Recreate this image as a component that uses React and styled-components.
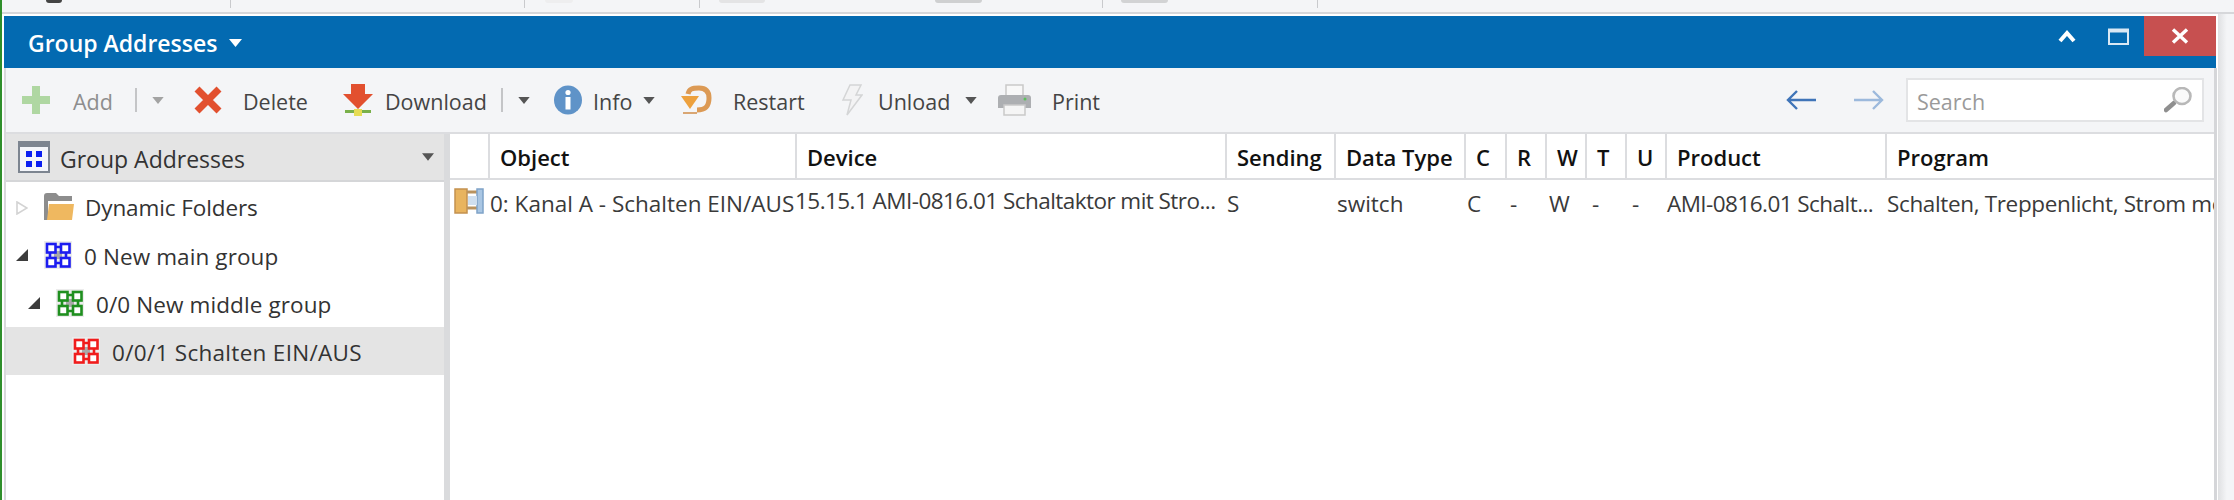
import styled, { createGlobalStyle } from "styled-components"

const GlobalStyle = createGlobalStyle`
  html, body { margin: 0; padding: 0; background: #fff; }
  body { font-family: "Open Sans", "Noto Sans", sans-serif; }
`

const Shell = styled.div`
  width: 2234px;
  height: 500px;
  overflow: hidden;
  display: flex;
  box-sizing: border-box;
  border-left: 2px solid #2f8f2b;
`
const Main = styled.div`
  flex: 1;
  display: flex;
  flex-direction: column;
  min-width: 0;
`
const TopStrip = styled.div`
  height: 12px;
  display: flex;
  background: #f4f5f7;
  border-bottom: 2px solid #d6d7da;
  overflow: hidden;
`
const TopTab = styled.div`
  width: ${(p) => p.$w}px;
  height: 8px;
  flex: none;
  box-sizing: border-box;
  display: flex;
  gap: ${(p) => p.$gap || 0}px;
  padding-left: ${(p) => p.$pad || 0}px;
  border-right: 1px solid #c9cacd;
`
const Stub = styled.div`
  width: ${(p) => p.$w}px;
  height: 3px;
  background: ${(p) => p.$color};
  border-radius: 0 0 6px 6px;
  filter: blur(0.6px);
`
const Stage = styled.div`
  flex: 1;
  display: flex;
  min-height: 0;
  background: #fff;
  padding-left: 2px;
`
const Window = styled.div`
  width: 2213px;
  flex: none;
  display: flex;
  flex-direction: column;
  padding-top: 2px;
`
const Backdrop = styled.div`
  flex: 1;
  margin: 0 0 0 1px;
  background: linear-gradient(to right, #dfe0e2, #f4f5f7 55%);
`
const TitleBar = styled.div`
  height: 52px;
  flex: none;
  margin-right: 1px;
  background: #036ab1;
  display: flex;
  align-items: flex-start;
  color: #fff;
`
const Title = styled.div`
  display: flex;
  align-items: center;
  gap: 11px;
  height: 52px;
  padding: 1px 0 0 24px;
  box-sizing: border-box;
  font-size: 23px;
  font-weight: 600;
`
const WindowButtons = styled.div`
  margin-left: auto;
  display: flex;
  align-items: flex-start;
`
const WinButton = styled.div`
  width: ${(p) => p.$w}px;
  height: 40px;
  display: flex;
  align-items: center;
  justify-content: center;
  background: ${(p) => (p.$close ? "#c75050" : "transparent")};
`
const Body = styled.div`
  flex: 1;
  min-height: 0;
  display: flex;
  flex-direction: column;
  border-left: 2px solid #d9d9db;
  border-right: 3px solid #d5d6d9;
`
const Toolbar = styled.div`
  height: 66px;
  flex: none;
  box-sizing: border-box;
  display: flex;
  align-items: center;
  padding-left: 15px;
  background: #f4f5f7;
  border-bottom: 2px solid #dcdde0;
`
const ToolButton = styled.div`
  width: ${(p) => p.$w}px;
  flex: none;
  display: flex;
  align-items: center;
  gap: ${(p) => p.$gap}px;
`
const ToolLabel = styled.span`
  font-size: 21.5px;
  line-height: 28px;
  margin-top: 3px;
  color: ${(p) => (p.$muted ? "#8e8e8e" : "#444")};
  white-space: nowrap;
`
const ToolDivider = styled.div`
  width: 2px;
  height: 24px;
  flex: none;
  margin-right: 15px;
  background: #c4c5c7;
`
const NavArrows = styled.div`
  margin-left: auto;
  display: flex;
  align-items: center;
  gap: 38px;
  margin-right: 22px;
`
const SearchBox = styled.div`
  width: 298px;
  height: 44px;
  flex: none;
  box-sizing: border-box;
  margin-right: 10px;
  display: flex;
  align-items: center;
  justify-content: space-between;
  padding: 0 10px 0 9px;
  background: #fff;
  border: 2px solid #e3e4e6;
  color: #9a9a9a;
  font-size: 21.5px;
`
const SearchText = styled.span`
  margin-top: 3px;
`
const Content = styled.div`
  flex: 1;
  min-height: 0;
  display: flex;
  background: #fff;
`
const Sidebar = styled.div`
  width: 438px;
  flex: none;
  border-right: 6px solid #dadbdd;
`
const SideHeader = styled.div`
  height: 46px;
  margin-bottom: 1px;
  display: flex;
  align-items: center;
  padding: 0 10px 0 12px;
  background: #e4e4e4;
  border-bottom: 2px solid #d5d6d8;
  font-size: 23px;
  color: #333;
`
const SideTitle = styled.span`
  flex: 1;
  margin: 3px 0 0 10px;
`
const TreeRow = styled.div`
  height: 48px;
  box-sizing: border-box;
  display: flex;
  align-items: center;
  padding-left: ${(p) => p.$indent}px;
  background: ${(p) => (p.$selected ? "#e4e4e4" : "transparent")};
  font-size: 22.5px;
  letter-spacing: ${(p) => p.$track || 0}px;
  color: #333;
  white-space: nowrap;
`
const TreeCaret = styled.span`
  width: 12px;
  height: 12px;
  flex: none;
  margin-right: 16px;
  display: flex;
`
const TreeLabel = styled.span`
  margin-left: ${(p) => p.$gap ?? 12}px;
  margin-top: ${(p) => p.$top ?? 2}px;
`
const Grid = styled.div`
  flex: 1;
  min-width: 0;
  overflow: hidden;
`
const GridLine = styled.div`
  display: grid;
  grid-template-columns: 40px 307px 430px 109px 130px 41px 40px 40px 40px 40px 220px 327px;
`
const HeaderCell = styled.div`
  height: 46px;
  box-sizing: border-box;
  padding-left: 10px;
  border-right: ${(p) => (p.$last ? "none" : "2px solid #dcdde0")};
  border-bottom: 2px solid #dcdde0;
  font-size: 22px;
  font-weight: 600;
  line-height: 47px;
  color: #111;
  white-space: nowrap;
  overflow: hidden;
`
const RowCell = styled.div`
  height: 48px;
  line-height: ${(p) => (p.$raised ? 42 : 47)}px;
  padding-left: ${(p) => p.$pad || 0}px;
  margin-left: ${(p) => p.$shift || 0}px;
  font-size: 22.5px;
  letter-spacing: ${(p) => p.$track || 0}px;
  color: #3a3a3a;
  white-space: nowrap;
  overflow: ${(p) => (p.$clip ? "hidden" : "visible")};
`
const ObjectIconCell = styled.div`
  height: 48px;
  padding: 8px 0 0 4px;
  box-sizing: border-box;
`
const Caret = ({ color = "#555", w = 13, h = 8 }) => (
  <svg width={w} height={h} viewBox="0 0 13 8" style={{ flex: "none" }}>
    <path d="M0 0H13L6.5 8Z" fill={color} />
  </svg>
)

const PlusIcon = () => (
  <svg width="30" height="30" viewBox="0 0 30 30" style={{ flex: "none" }}>
    <path d="M11 1H19V11H29V19H19V29H11V19H1V11H11Z" fill="#afd7a2" />
  </svg>
)
const CrossIcon = () => (
  <svg width="30" height="30" viewBox="0 0 30 30" style={{ flex: "none" }}>
    <path d="M4 4L26 26M26 4L4 26" stroke="#e2502f" strokeWidth="7" />
  </svg>
)
const DownloadIcon = () => (
  <svg width="30" height="32" viewBox="0 0 30 32" style={{ flex: "none" }}>
    <path d="M8 0H22V10H30L15 25L0 10H8Z" fill="#e2502f" />
    <rect x="2" y="26" width="26" height="3" fill="#79b04a" />
    <rect x="11" y="25" width="8" height="7" fill="#e6dc55" />
  </svg>
)
const InfoIcon = () => (
  <svg width="28" height="30" viewBox="0 0 28 30" style={{ flex: "none" }}>
    <ellipse cx="14" cy="15" rx="14" ry="14.5" fill="#5f93c8" />
    <circle cx="14" cy="7.5" r="2.6" fill="#fff" />
    <rect x="11.5" y="12" width="5" height="12.5" fill="#fff" />
  </svg>
)
const RestartIcon = () => (
  <svg width="32" height="30" viewBox="0 0 32 30" style={{ flex: "none" }}>
    <path d="M8 9C9 4 12 3 19 3C26 3 29 7 29 13C29 21 26 25 17 25" fill="none" stroke="#dc9a55" strokeWidth="5" />
    <path d="M1 11H19L10 24Z" fill="#eda13e" />
    <rect x="3" y="27" width="14" height="2" fill="#d9a673" />
  </svg>
)
const BoltIcon = () => (
  <svg width="22" height="32" viewBox="0 0 22 32" style={{ flex: "none" }}>
    <path d="M9 1H20L15 11H21L6 31L10 16H2Z" fill="#f3f3f4" stroke="#d4d5d6" strokeWidth="1.5" />
  </svg>
)
const PrintIcon = () => (
  <svg width="33" height="32" viewBox="0 0 33 32" style={{ flex: "none" }}>
    <rect x="8" y="1" width="17" height="11" fill="#f8f8f8" stroke="#c9c9c9" strokeWidth="1.5" />
    <path d="M3 11H30Q33 11 33 14V24H0V14Q0 11 3 11Z" fill="#adafb2" />
    <circle cx="27" cy="15" r="1.5" fill="#5cc15c" />
    <rect x="6" y="21" width="21" height="10" fill="#f5f5f5" stroke="#c9c9c9" strokeWidth="1.5" />
  </svg>
)
const ArrowIcon = ({ color, flip }) => (
  <svg width="30" height="20" viewBox="0 0 30 20" style={{ transform: flip ? "scaleX(-1)" : "none", flex: "none" }}>
    <path d="M30 10H2M11 1L2 10L11 19" fill="none" stroke={color} strokeWidth="2.4" />
  </svg>
)
const SearchIcon = () => (
  <svg width="28" height="26" viewBox="0 0 28 26" style={{ flex: "none" }}>
    <path d="M2 23L10 16" stroke="#8f8f8f" strokeWidth="4.5" strokeLinecap="round" />
    <ellipse cx="18" cy="9" rx="8.5" ry="8" fill="#fafafa" stroke="#b8b8b8" strokeWidth="2.6" />
  </svg>
)
const ChevronIcon = () => (
  <svg width="18" height="14" viewBox="0 0 18 14">
    <path d="M2 12L9 4L16 12" fill="none" stroke="#fff" strokeWidth="4" />
  </svg>
)
const MaximizeIcon = () => (
  <svg width="21" height="17" viewBox="0 0 21 17">
    <rect x="1" y="1.5" width="19" height="14.5" fill="none" stroke="#d9e8f4" strokeWidth="2" />
    <rect x="1" y="1" width="19" height="3.5" fill="#d9e8f4" />
  </svg>
)
const CloseIcon = () => (
  <svg width="18" height="16" viewBox="0 0 18 16">
    <path d="M2 1.5L16 14.5M16 1.5L2 14.5" stroke="#fff" strokeWidth="3.4" />
  </svg>
)
const PanelIcon = () => (
  <svg width="32" height="32" viewBox="0 0 32 32" style={{ flex: "none" }}>
    <rect x="1" y="1" width="30" height="30" fill="#f4f6fa" stroke="#7d8590" strokeWidth="2" />
    <rect x="1" y="1" width="30" height="5" fill="#7d8590" />
    <rect x="8" y="10" width="6" height="6" fill="#0b1ff0" />
    <rect x="18" y="10" width="6" height="6" fill="#0b1ff0" />
    <rect x="8" y="20" width="6" height="6" fill="#0b1ff0" />
    <rect x="18" y="20" width="6" height="6" fill="#0b1ff0" />
  </svg>
)
const GroupIcon = ({ color }) => (
  <svg width="28" height="28" viewBox="0 0 28 28" style={{ flex: "none" }}>
    <rect width="28" height="28" fill="#ececec" />
    <rect x="10" y="10" width="8" height="8" fill="#a9a9a9" />
    <path d="M11 6H17M11 22H17M6 11V17M22 11V17" stroke={color} strokeWidth="2.6" />
    {[3, 17].map((x) =>
      [3, 17].map((y) => (
        <rect key={`${x}-${y}`} x={x} y={y} width="8.5" height="8.5" fill="#fff" stroke={color} strokeWidth="2.6" />
      ))
    )}
  </svg>
)
const FolderIcon = () => (
  <svg width="30" height="28" viewBox="0 0 30 28" style={{ flex: "none" }}>
    <path d="M0 3Q0 0 3 0H12L15 3H28V8H4V27H0Z" fill="#8d8d8d" />
    <path d="M5 11H30L28 27H3Z" fill="#efb860" />
  </svg>
)
const ObjectIcon = () => (
  <svg width="30" height="26" viewBox="0 0 30 26">
    <rect x="1" y="1" width="12" height="24" fill="#e8b45f" stroke="#c3914f" strokeWidth="1.5" />
    <path d="M13 4H23M13 20H23" stroke="#b9935f" strokeWidth="3" />
    <rect x="23" y="1" width="6" height="24" fill="#a9c6e3" stroke="#7fa3c8" strokeWidth="1.5" />
    <rect x="14" y="8" width="9" height="9" fill="#cfdfef" />
  </svg>
)
const TreeArrow = ({ open }) =>
  open ? (
    <svg width="12" height="12" viewBox="0 0 12 12">
      <path d="M12 0V12H0Z" fill="#3c3c3c" />
    </svg>
  ) : (
    <svg width="12" height="14" viewBox="0 0 12 14">
      <path d="M1 1L11 7L1 13Z" fill="#fff" stroke="#d3d3d3" strokeWidth="1.6" />
    </svg>
  )

const headers = ["", "Object", "Device", "Sending", "Data Type", "C", "R", "W", "T", "U", "Product", "Program"]

export default function App() {
  return (
    <>
      <GlobalStyle />
      <Shell>
        <Main>
          <TopStrip>
            <TopTab $w={229} $pad={44}>
              <Stub $w={16} $color="#444" />
            </TopTab>
            <TopTab $w={294} />
            <TopTab $w={175} $pad={20}>
              <Stub $w={28} $color="#eeeeef" />
            </TopTab>
            <TopTab $w={403} $pad={19} $gap={170}>
              <Stub $w={46} $color="#e4e4e5" />
              <Stub $w={47} $color="#cfd0d1" />
            </TopTab>
            <TopTab $w={215} $pad={18}>
              <Stub $w={47} $color="#d2d3d4" />
            </TopTab>
          </TopStrip>
          <Stage>
            <Window>
              <TitleBar>
                <Title>
                  Group Addresses
                  <Caret color="#fff" w={15} h={8} />
                </Title>
                <WindowButtons>
                  <WinButton $w={50}>
                    <ChevronIcon />
                  </WinButton>
                  <WinButton $w={52}>
                    <MaximizeIcon />
                  </WinButton>
                  <WinButton $w={72} $close>
                    <CloseIcon />
                  </WinButton>
                </WindowButtons>
              </TitleBar>
              <Body>
                <Toolbar>
                  <ToolButton $w={114} $gap={22}>
                    <PlusIcon />
                    <ToolLabel $muted>Add</ToolLabel>
                  </ToolButton>
                  <ToolDivider />
                  <ToolButton $w={41} $gap={0}>
                    <Caret color="#a3a3a3" w={12} h={7} />
                  </ToolButton>
                  <ToolButton $w={150} $gap={20}>
                    <CrossIcon />
                    <ToolLabel>Delete</ToolLabel>
                  </ToolButton>
                  <ToolButton $w={158} $gap={12}>
                    <DownloadIcon />
                    <ToolLabel>Download</ToolLabel>
                  </ToolButton>
                  <ToolDivider />
                  <ToolButton $w={36} $gap={0}>
                    <Caret w={12} h={7} />
                  </ToolButton>
                  <ToolButton $w={126} $gap={11}>
                    <InfoIcon />
                    <ToolLabel>Info</ToolLabel>
                    <Caret w={12} h={7} />
                  </ToolButton>
                  <ToolButton $w={161} $gap={21}>
                    <RestartIcon />
                    <ToolLabel>Restart</ToolLabel>
                  </ToolButton>
                  <ToolButton $w={157} $gap={15}>
                    <BoltIcon />
                    <ToolLabel>Unload</ToolLabel>
                    <Caret w={12} h={7} />
                  </ToolButton>
                  <ToolButton $w={110} $gap={21}>
                    <PrintIcon />
                    <ToolLabel>Print</ToolLabel>
                  </ToolButton>
                  <NavArrows>
                    <ArrowIcon color="#3f74b8" />
                    <ArrowIcon color="#9cb9dc" flip />
                  </NavArrows>
                  <SearchBox>
                    <SearchText>Search</SearchText>
                    <SearchIcon />
                  </SearchBox>
                </Toolbar>
                <Content>
                  <Sidebar>
                    <SideHeader>
                      <PanelIcon />
                      <SideTitle>Group Addresses</SideTitle>
                      <Caret w={12} h={8} />
                    </SideHeader>
                    <TreeRow $indent={10} $track={-0.1}>
                      <TreeCaret>
                        <TreeArrow />
                      </TreeCaret>
                      <FolderIcon />
                      <TreeLabel $gap={11} $top={0}>Dynamic Folders</TreeLabel>
                    </TreeRow>
                    <TreeRow $indent={10} $track={0.1}>
                      <TreeCaret>
                        <TreeArrow open />
                      </TreeCaret>
                      <GroupIcon color="#1c1cf0" />
                      <TreeLabel>0 New main group</TreeLabel>
                    </TreeRow>
                    <TreeRow $indent={22} $track={0.1}>
                      <TreeCaret>
                        <TreeArrow open />
                      </TreeCaret>
                      <GroupIcon color="#1f8f1f" />
                      <TreeLabel>0/0 New middle group</TreeLabel>
                    </TreeRow>
                    <TreeRow $indent={38} $track={0.3} $selected>
                      <TreeCaret />
                      <GroupIcon color="#f01c1c" />
                      <TreeLabel>0/0/1 Schalten EIN/AUS</TreeLabel>
                    </TreeRow>
                  </Sidebar>
                  <Grid>
                    <GridLine>
                      {headers.map((h, i) => (
                        <HeaderCell key={i} $last={i === headers.length - 1}>
                          {h}
                        </HeaderCell>
                      ))}
                    </GridLine>
                    <GridLine>
                      <ObjectIconCell>
                        <ObjectIcon />
                      </ObjectIconCell>
                      <RowCell>0: Kanal A - Schalten EIN/AUS</RowCell>
                      <RowCell $raised $shift={-2} $track={-0.55}>15.15.1 AMI-0816.01 Schaltaktor mit Stro...</RowCell>
                      <RowCell>S</RowCell>
                      <RowCell $pad={1}>switch</RowCell>
                      <RowCell $pad={1}>C</RowCell>
                      <RowCell $pad={3}>-</RowCell>
                      <RowCell $pad={2}>W</RowCell>
                      <RowCell $pad={5}>-</RowCell>
                      <RowCell $pad={5}>-</RowCell>
                      <RowCell $track={-0.55}>AMI-0816.01 Schalt...</RowCell>
                      <RowCell $clip $track={-0.35}>Schalten, Treppenlicht, Strom messen</RowCell>
                    </GridLine>
                  </Grid>
                </Content>
              </Body>
            </Window>
            <Backdrop />
          </Stage>
        </Main>
      </Shell>
    </>
  )
}
